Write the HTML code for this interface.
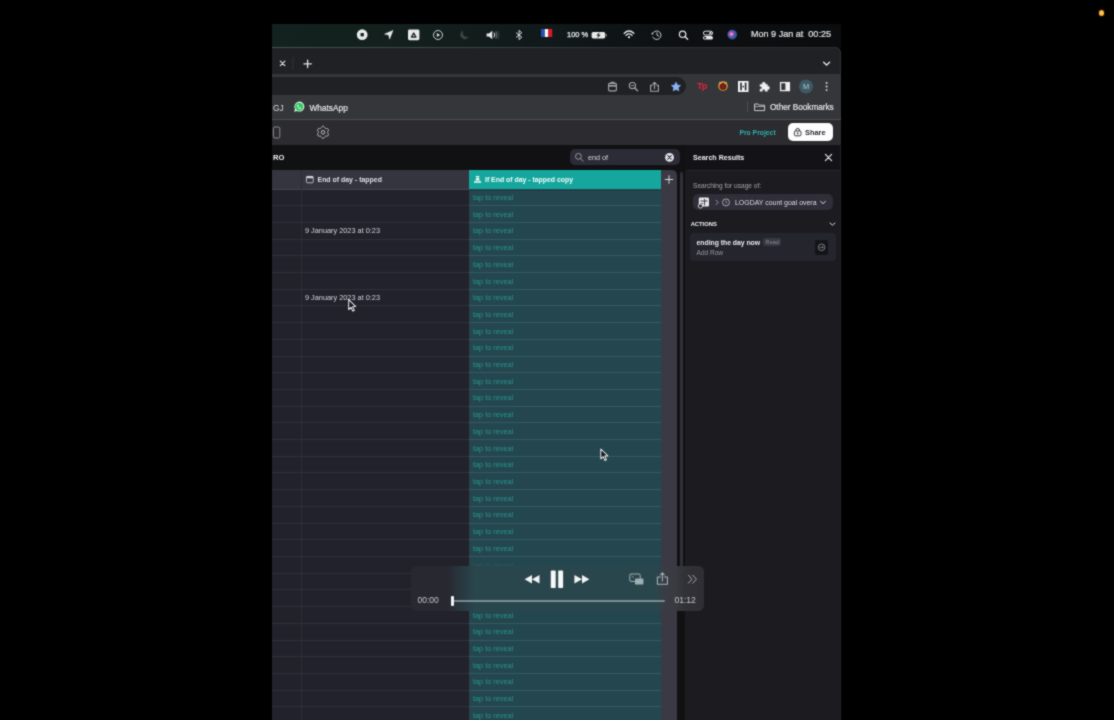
<!DOCTYPE html>
<html><head><meta charset="utf-8"><title>Search Results</title>
<style>
html,body{margin:0;padding:0;background:#000;}
body{width:1114px;height:720px;position:relative;overflow:hidden;font-family:"Liberation Sans",sans-serif;}
.a{position:absolute;}
.t{position:absolute;white-space:nowrap;line-height:10px;height:10px;margin-top:0.7px;}
svg{position:absolute;overflow:visible;}
.hl{position:absolute;left:272.4px;width:197.2px;height:1px;background:#30303a;}
.tl{position:absolute;left:469px;width:192px;height:1px;background:#375960;}
.tap{left:473px;font-size:7.3px;color:#29938c;}
</style></head><body>
<svg width="0" height="0" style="position:absolute"><defs><filter id="soft" x="0" y="0" width="100%" height="100%" color-interpolation-filters="sRGB"><feConvolveMatrix order="3" kernelMatrix="1 2 1 2 11 2 1 2 1" divisor="23" edgeMode="duplicate" preserveAlpha="true"/></filter></defs></svg>
<div id="root" style="position:absolute;left:0;top:0;width:1114px;height:730px;background:#000;filter:url(#soft);">
<!-- orange dot -->
<div class="a" style="left:1098.5px;top:10.3px;width:5.4px;height:5.4px;border-radius:50%;background:radial-gradient(circle,#ffd45a 0%,#f7b63c 55%,#e8801c 100%);box-shadow:0 0 1.5px #c8500c;"></div>

<!-- menu bar -->
<div class="a" id="menubar" style="left:272.4px;top:24px;width:568.2px;height:23.5px;background:linear-gradient(90deg,#13221e 0%,#13201d 22%,#11191a 48%,#0d1012 72%,#0b0c0e 100%);"></div>

<!-- window -->
<div class="a" id="win" style="left:272.4px;top:47px;width:568.7px;height:683px;background:#202124;border-top-right-radius:6px;overflow:hidden;box-shadow:inset -1px 0 0 #303135;">
  <div class="a" style="left:0;top:0;width:569px;height:1px;background:linear-gradient(90deg,#43524f 0%,#3a4644 35%,#2e3335 60%,#2b2d30 100%);"></div>
  <div class="a" id="toolbar" style="left:0;top:27px;width:569px;height:45.5px;background:#35363a;"></div>
  <div class="a" id="omni" style="left:-20px;top:30px;width:433.5px;height:18.4px;border-radius:9px;background:#202124;"></div>
  <div class="a" style="left:0;top:71.7px;width:569px;height:1.2px;background:#4b4c50;"></div>
  <div class="a" id="apptb" style="left:0;top:72.9px;width:569px;height:25.3px;background:#2b2b30;"></div>
  <div class="a" id="darkhd" style="left:0;top:98px;width:569px;height:590px;background:#111114;"></div>
</div>

<!-- GRID -->
<div class="a" id="gridhd" style="left:272.4px;top:169.5px;width:197.2px;height:19.5px;background:#35353f;"></div>
<div class="a" id="gridbody" style="left:272.4px;top:189px;width:197.2px;height:541px;background:#22222b;"></div>
<div class="a" id="tealhd" style="left:469px;top:169.5px;width:192px;height:20px;background:#15a79d;"></div>
<div class="a" id="tealbody" style="left:469px;top:189px;width:192px;height:541px;background:#24474f;"></div>
<div class="a" id="pluscol" style="left:661px;top:169.5px;width:16.2px;height:561px;background:#3a3944;border-top-right-radius:5px;"></div>
<div class="a" style="left:272.4px;top:188.5px;width:197.2px;height:1px;background:#44444e;"></div>
<div class="a" style="left:300.5px;top:169.5px;width:1px;height:561px;background:#2d2d37;"></div>
<div class="a" style="left:468.5px;top:189px;width:1px;height:541px;background:#2f3f49;"></div>
<div class="hl" style="top:205.20px"></div><div class="hl" style="top:221.91px"></div><div class="hl" style="top:238.62px"></div><div class="hl" style="top:255.32px"></div><div class="hl" style="top:272.02px"></div><div class="hl" style="top:288.73px"></div><div class="hl" style="top:305.44px"></div><div class="hl" style="top:322.14px"></div><div class="hl" style="top:338.84px"></div><div class="hl" style="top:355.55px"></div><div class="hl" style="top:372.25px"></div><div class="hl" style="top:388.96px"></div><div class="hl" style="top:405.66px"></div><div class="hl" style="top:422.37px"></div><div class="hl" style="top:439.07px"></div><div class="hl" style="top:455.78px"></div><div class="hl" style="top:472.48px"></div><div class="hl" style="top:489.19px"></div><div class="hl" style="top:505.89px"></div><div class="hl" style="top:522.60px"></div><div class="hl" style="top:539.30px"></div><div class="hl" style="top:556.01px"></div><div class="hl" style="top:572.71px"></div><div class="hl" style="top:589.42px"></div><div class="hl" style="top:606.12px"></div><div class="hl" style="top:622.83px"></div><div class="hl" style="top:639.53px"></div><div class="hl" style="top:656.24px"></div><div class="hl" style="top:672.94px"></div><div class="hl" style="top:689.65px"></div><div class="hl" style="top:706.35px"></div><div class="hl" style="top:723.06px"></div>
<div class="tl" style="top:205.20px"></div><div class="tl" style="top:221.91px"></div><div class="tl" style="top:238.62px"></div><div class="tl" style="top:255.32px"></div><div class="tl" style="top:272.02px"></div><div class="tl" style="top:288.73px"></div><div class="tl" style="top:305.44px"></div><div class="tl" style="top:322.14px"></div><div class="tl" style="top:338.84px"></div><div class="tl" style="top:355.55px"></div><div class="tl" style="top:372.25px"></div><div class="tl" style="top:388.96px"></div><div class="tl" style="top:405.66px"></div><div class="tl" style="top:422.37px"></div><div class="tl" style="top:439.07px"></div><div class="tl" style="top:455.78px"></div><div class="tl" style="top:472.48px"></div><div class="tl" style="top:489.19px"></div><div class="tl" style="top:505.89px"></div><div class="tl" style="top:522.60px"></div><div class="tl" style="top:539.30px"></div><div class="tl" style="top:556.01px"></div><div class="tl" style="top:572.71px"></div><div class="tl" style="top:589.42px"></div><div class="tl" style="top:606.12px"></div><div class="tl" style="top:622.83px"></div><div class="tl" style="top:639.53px"></div><div class="tl" style="top:656.24px"></div><div class="tl" style="top:672.94px"></div><div class="tl" style="top:689.65px"></div><div class="tl" style="top:706.35px"></div><div class="tl" style="top:723.06px"></div>
<div class="a" style="left:0;top:0;width:1114px;height:720px;will-change:transform;"><div class="t tap" style="top:192.35px">tap to reveal</div><div class="t tap" style="top:209.06px">tap to reveal</div><div class="t tap" style="top:225.76px">tap to reveal</div><div class="t tap" style="top:242.47px">tap to reveal</div><div class="t tap" style="top:259.17px">tap to reveal</div><div class="t tap" style="top:275.88px">tap to reveal</div><div class="t tap" style="top:292.58px">tap to reveal</div><div class="t tap" style="top:309.29px">tap to reveal</div><div class="t tap" style="top:325.99px">tap to reveal</div><div class="t tap" style="top:342.70px">tap to reveal</div><div class="t tap" style="top:359.40px">tap to reveal</div><div class="t tap" style="top:376.11px">tap to reveal</div><div class="t tap" style="top:392.81px">tap to reveal</div><div class="t tap" style="top:409.52px">tap to reveal</div><div class="t tap" style="top:426.22px">tap to reveal</div><div class="t tap" style="top:442.93px">tap to reveal</div><div class="t tap" style="top:459.63px">tap to reveal</div><div class="t tap" style="top:476.34px">tap to reveal</div><div class="t tap" style="top:493.04px">tap to reveal</div><div class="t tap" style="top:509.75px">tap to reveal</div><div class="t tap" style="top:526.45px">tap to reveal</div><div class="t tap" style="top:543.16px">tap to reveal</div><div class="t tap" style="top:559.86px;opacity:0.3">tap to reveal</div><div class="t tap" style="top:576.57px">tap to reveal</div><div class="t tap" style="top:593.27px">tap to reveal</div><div class="t tap" style="top:609.98px">tap to reveal</div><div class="t tap" style="top:626.68px">tap to reveal</div><div class="t tap" style="top:643.39px">tap to reveal</div><div class="t tap" style="top:660.09px">tap to reveal</div><div class="t tap" style="top:676.80px">tap to reveal</div><div class="t tap" style="top:693.50px">tap to reveal</div><div class="t tap" style="top:710.21px">tap to reveal</div><div class="t tap" style="top:726.91px">tap to reveal</div></div>
<div class="a" style="left:469px;top:189.5px;width:192px;height:1px;background:#1f3e47;"></div>
<!-- scrollbar -->
<div class="a" style="left:679.6px;top:172px;width:3.1px;height:420px;background:#30303a;border-radius:1.5px;"></div>

<!-- right panel -->
<div class="a" id="panelhd" style="left:685px;top:145px;width:156.1px;height:25px;background:#131317;"></div>
<div class="a" id="panel" style="left:685px;top:169.7px;width:156.1px;height:551px;background:#1b1b20;border-top-left-radius:4px;border-top:1px solid #26262d;"></div>
<div class="a" style="left:839.9px;top:146px;width:1.2px;height:584px;background:#222228;"></div>

<div class="a" id="txt" style="left:0;top:0;width:1114px;height:720px;will-change:transform;">
<!-- menu bar text -->
<div class="t" style="left:567px;top:29.3px;font-size:7.5px;color:#e6e8e8;-webkit-text-stroke:0.25px #e6e8e8;">100 %</div>
<div class="t" style="left:751px;top:28.3px;font-size:9.05px;color:#e4e4e6;-webkit-text-stroke:0.2px #e4e4e6;">Mon 9 Jan at&nbsp; 00:25</div>
<!-- bookmarks -->
<div class="t" style="left:273px;top:102px;font-size:8.3px;color:#dcdde0;">GJ</div>
<div class="t" style="left:309.5px;top:102px;font-size:8.3px;color:#e2e3e6;-webkit-text-stroke:0.2px #e2e3e6;">WhatsApp</div>
<div class="t" style="left:770px;top:102.3px;font-size:8.2px;color:#e2e3e6;-webkit-text-stroke:0.2px #e2e3e6;">Other Bookmarks</div>
<!-- app toolbar -->
<div class="t" style="left:739.4px;top:127.4px;font-size:6.8px;font-weight:bold;color:#2fb0a9;">Pro Project</div>
<div class="a" style="left:787.5px;top:123px;width:45.5px;height:18px;border-radius:5px;background:#fdfdfd;"></div>
<div class="t" style="left:805px;top:127.4px;font-size:7.4px;font-weight:bold;color:#2a2a30;">Share</div>
<!-- dark header -->
<div class="t" style="left:273px;top:152px;font-size:7.6px;font-weight:bold;color:#f0f0f2;">RO</div>
<div class="a" style="left:569.5px;top:149px;width:110px;height:16.4px;border-radius:5px;background:#2c2c36;"></div>
<div class="t" style="left:588px;top:152.2px;font-size:7.2px;color:#d6d6dc;">end of</div>
<div class="t" style="left:693px;top:152.3px;font-size:7.1px;font-weight:bold;color:#ededf0;">Search Results</div>
<!-- grid header -->
<div class="t" style="left:317.5px;top:174.3px;font-size:6.95px;font-weight:bold;color:#dedee4;">End of day - tapped</div>
<div class="t" style="left:485px;top:174.3px;font-size:6.9px;font-weight:bold;color:#f2fbfa;">If End of day - tapped copy</div>
<div class="t" style="left:305px;top:225.7px;font-size:7.33px;color:#d4d4da;">9 January 2023 at 0:23</div>
<div class="t" style="left:305px;top:292.5px;font-size:7.33px;color:#d4d4da;">9 January 2023 at 0:23</div>
<!-- right panel -->
<div class="t" style="left:693px;top:180.4px;font-size:6.6px;color:#a4a4ae;">Searching for usage of:</div>
<div class="a" style="left:693px;top:194.2px;width:139.7px;height:16.2px;border-radius:5px;background:#2f2e39;"></div>
<div class="t" style="left:735px;top:197.3px;font-size:6.95px;color:#dedee4;">LOGDAY count goal overa</div>
<div class="t" style="left:690.7px;top:218.5px;font-size:5.8px;font-weight:bold;color:#f0f0f4;">ACTIONS</div>
<div class="a" style="left:690px;top:233.4px;width:145.8px;height:28px;border-radius:4px;background:#25252d;"></div>
<div class="t" style="left:696.6px;top:237.4px;font-size:6.8px;font-weight:bold;color:#eaeaee;">ending the day now</div>
<div class="a" style="left:763.3px;top:238px;width:18px;height:8.2px;border-radius:2px;background:#383843;"></div>
<div class="t" style="left:765.6px;top:236.3px;font-size:5.6px;color:#8a8a96;">Read</div>
<div class="t" style="left:696.6px;top:247.6px;font-size:6.5px;color:#9c9ca6;">Add Row</div>
<div class="a" style="left:814.8px;top:240px;width:13.3px;height:14.5px;border-radius:2px;background:#141418;"></div>

</div>
<svg width="1114" height="720" viewBox="0 0 1114 720" style="left:0;top:0;">
<!-- ===== menu bar icons ===== -->
<g fill="#e9ebea" stroke="none">
  <!-- stop record -->
  <circle cx="362.2" cy="34.7" r="5.4"/>
  <rect x="360.5" y="33" width="3.4" height="3.4" rx="0.8" fill="#15211e"/>
  <!-- location arrow -->
  <path d="M393 30.4 L384.6 34.1 L388.7 35.0 L389.6 39.1 Z" stroke="#e9ebea" stroke-width="0.5" stroke-linejoin="round"/>
  <!-- square w/ triangle -->
  <rect x="408" y="29.6" width="11.4" height="10.6" rx="1.4"/>
  <path d="M413.7 33 L416 37 L411.4 37 Z" fill="none" stroke="#15211e" stroke-width="1.3" stroke-linejoin="round"/>
  <!-- play circle -->
  <circle cx="438" cy="35" r="4.5" fill="none" stroke="#d8dbda" stroke-width="0.95"/>
  <path d="M436.8 33 L440.2 35 L436.8 37 Z" fill="#d8dbda"/>
  <!-- moon (dim) -->
  <path d="M463.5 30.2 A4.6 4.6 0 1 0 469 36.6 A4.4 4.4 0 0 1 463.5 30.2 Z" fill="#3a4644"/>
  <!-- speaker -->
  <path d="M486.6 33.4 L489 33.4 L492.3 30.8 L492.3 39.2 L489 36.6 L486.6 36.6 Z"/>
  <path d="M494 32.6 Q495.6 35 494 37.4" fill="none" stroke="#e9ebea" stroke-width="1"/>
  <path d="M495.9 31.4 Q498.2 35 495.9 38.6" fill="none" stroke="#848c8a" stroke-width="0.9"/>
  <path d="M497.9 30.4 Q500.6 35 497.9 39.6" fill="none" stroke="#3f4745" stroke-width="0.9"/>
  <!-- bluetooth -->
  <path d="M516 32.6 L521.8 37.2 L519 39.6 L519 30.4 L521.8 32.8 L516 37.4" fill="none" stroke="#dfe1e0" stroke-width="0.95" stroke-linejoin="round"/>
</g>
<!-- flag -->
<rect x="541" y="29" width="3.8" height="8" fill="#2350b0"/>
<rect x="544.8" y="29" width="3.6" height="8" fill="#f4f4f6"/>
<rect x="548.4" y="29" width="3.8" height="8" fill="#e1142c"/>
<!-- battery -->
<rect x="591.6" y="32" width="13.6" height="6.4" rx="1.6" fill="#e9ebea"/>
<rect x="605.7" y="34" width="1.1" height="2.4" rx="0.5" fill="#8c9290"/>
<path d="M599.6 32.3 L596.2 35.6 L598.3 35.6 L597.2 38.2 L600.8 34.8 L598.7 34.8 Z" fill="#15191a"/>
<!-- wifi -->
<g fill="none" stroke="#e9ebea" stroke-width="1.35" stroke-linecap="round">
  <path d="M624.2 33.2 Q629 28.9 633.8 33.2"/>
  <path d="M626 35.2 Q629 32.6 632 35.2"/>
</g>
<circle cx="629" cy="37.2" r="1.1" fill="#e9ebea"/>
<!-- time machine -->
<g fill="none" stroke="#d6d8d8" stroke-width="0.95" stroke-linecap="round">
  <path d="M653.4 32.4 A4.3 4.3 0 1 1 652.8 37.2"/>
  <path d="M657 32.8 L657 35.2 L658.6 36.2"/>
</g>
<path d="M651.2 34.2 L653.6 34.6 L652.4 32.2 Z" fill="#e4e6e6"/>
<!-- search -->
<circle cx="682.6" cy="34.2" r="3.2" fill="none" stroke="#e6e6e8" stroke-width="1.25"/>
<path d="M685 36.6 L687.6 39.2" stroke="#e6e6e8" stroke-width="1.4" stroke-linecap="round"/>
<!-- control center -->
<rect x="703.4" y="31.2" width="9.2" height="3.8" rx="1.9" fill="none" stroke="#e6e6e8" stroke-width="1"/>
<circle cx="710.4" cy="33.1" r="1.2" fill="#e6e6e8"/>
<rect x="703" y="35.9" width="10" height="3.7" rx="1.85" fill="#e6e6e8"/>
<circle cx="705.1" cy="37.75" r="1.1" fill="#15171a"/>
<!-- siri -->
<defs>
  <radialGradient id="siri" cx="0.42" cy="0.45" r="0.6">
    <stop offset="0" stop-color="#e8d0ee"/>
    <stop offset="0.3" stop-color="#c05aa0"/>
    <stop offset="0.65" stop-color="#3a4fb8"/>
    <stop offset="1" stop-color="#1a6f86"/>
  </radialGradient>
</defs>
<circle cx="732.2" cy="34.6" r="4.8" fill="url(#siri)"/>

<!-- ===== tab bar ===== -->
<g stroke="#e4e5e8" stroke-width="1.1" stroke-linecap="round" fill="none">
  <path d="M280.3 61.1 L284.9 65.7 M284.9 61.1 L280.3 65.7"/>
  <path d="M303.9 63.8 L311.3 63.8 M307.6 60.1 L307.6 67.5" stroke-width="1.3"/>
  <path d="M823.6 62.2 L826.6 65 L829.6 62.2" stroke-width="1.3"/>
</g>
<rect x="292.5" y="57" width="0.8" height="13" fill="#36373b"/>

<!-- ===== omnibox icons ===== -->
<g fill="none" stroke="#a2a5aa" stroke-width="1.15" stroke-linejoin="round">
  <!-- clipboard -->
  <rect x="608.6" y="83.4" width="7.8" height="7.4" rx="1"/>
  <path d="M608.6 85.8 L616.4 85.8" stroke-width="1.6"/>
  <path d="M611 83 L611 82.2 L614 82.2 L614 83"/>
  <!-- zoom -->
  <circle cx="632.4" cy="85.6" r="3.1"/>
  <path d="M634.8 88 L637.6 90.8" stroke-linecap="round" stroke-width="1.4"/>
  <path d="M630.9 85.6 L633.9 85.6" stroke-width="0.9"/>
  <!-- share -->
  <path d="M652.4 85.4 L650.6 85.4 L650.6 91.2 L658.4 91.2 L658.4 85.4 L656.6 85.4"/>
  <path d="M654.5 88.4 L654.5 82.6 M652.8 84.2 L654.5 82.4 L656.2 84.2" stroke-linecap="round"/>
</g>
<!-- star -->
<path d="M676 82 L677.45 84.95 L680.7 85.4 L678.35 87.7 L678.9 90.95 L676 89.4 L673.1 90.95 L673.65 87.7 L671.3 85.4 L674.55 84.95 Z" fill="#8ab4f8" stroke="#8ab4f8" stroke-width="0.5" stroke-linejoin="round"/>

<!-- ===== extension icons ===== -->
<text x="697" y="89.2" font-family="Liberation Sans, sans-serif" font-weight="bold" font-size="9.2" fill="#e4223c" letter-spacing="-0.8">Tp</text>
<!-- emoji -->
<circle cx="723" cy="86" r="4.8" fill="#d89a3c"/>
<circle cx="723" cy="86.4" r="3.4" fill="#3a2418"/>
<path d="M720.6 84 L725.4 89 M725.4 84 L720.6 89" stroke="#a01818" stroke-width="1.2"/>
<path d="M719.4 82.4 L721.4 83.6 M726.6 82.4 L724.6 83.6" stroke="#f0d070" stroke-width="1"/>
<!-- white square icon -->
<rect x="738" y="81" width="10.5" height="11" fill="#f4f4f6"/>
<rect x="740.2" y="82.6" width="1.6" height="7.8" fill="#202226"/>
<rect x="744.8" y="82.6" width="1.6" height="7.8" fill="#202226"/>
<rect x="742.6" y="85.8" width="1.4" height="1.6" fill="#202226"/>
<!-- puzzle -->
<path d="M760 84.4 L762.4 84.4 A1.5 1.5 0 1 1 765.2 84.4 L767.4 84.4 L767.4 86.4 A1.5 1.5 0 1 1 767.4 89.2 L767.4 91.2 L765 91.2 A1.4 1.4 0 1 0 762.4 91.2 L760 91.2 L760 89 A1.4 1.4 0 1 0 760 86.4 Z" fill="#f0f0f2" stroke="#f0f0f2" stroke-width="0.5" stroke-linejoin="round"/>
<!-- side panel -->
<rect x="780.6" y="82.6" width="8.8" height="8" fill="none" stroke="#f0f0f2" stroke-width="1.3"/>
<rect x="785.4" y="82.6" width="4" height="8" fill="#f0f0f2"/>
<!-- avatar -->
<circle cx="806" cy="86.5" r="7" fill="#3d5a66"/>
<text x="806" y="89.2" text-anchor="middle" font-family="Liberation Sans, sans-serif" font-size="7.4" fill="#b9ccd2">M</text>
<!-- dots -->
<circle cx="826.6" cy="82.9" r="0.95" fill="#e6e6ea"/>
<circle cx="826.6" cy="86.5" r="0.95" fill="#e6e6ea"/>
<circle cx="826.6" cy="90.1" r="0.95" fill="#e6e6ea"/>

<!-- ===== bookmarks bar ===== -->
<!-- whatsapp -->
<path d="M294.2 111.8 L295 108.9 A5 5 0 1 1 296.9 110.9 Z" fill="#f2f5f3"/>
<circle cx="299.2" cy="106.8" r="4.1" fill="#2fcb63"/>
<path d="M297.4 104.8 Q296.8 106.8 298.6 108.2 Q300.2 109.6 301.4 108.6 L300.6 107.6 L299.8 108 Q298.6 107.4 298.2 106.2 L298.7 105.6 L298.1 104.6 Z" fill="#f2f5f3"/>
<!-- folder -->
<rect x="747.2" y="101.6" width="0.8" height="10.6" fill="#55575c"/>
<path d="M754.6 104 L758.2 104 L759.2 105.2 L764.6 105.2 L764.6 110.6 L754.6 110.6 Z" fill="none" stroke="#c9cbd0" stroke-width="1" stroke-linejoin="round"/>
<path d="M754.6 106.6 L764.6 106.6" stroke="#c9cbd0" stroke-width="0.7"/>

<!-- ===== app toolbar ===== -->
<rect x="273.4" y="127" width="6.4" height="11" rx="1.6" fill="none" stroke="#8b8b93" stroke-width="1"/>
<!-- gear -->
<g fill="none" stroke="#c0c0c8" stroke-width="1" stroke-linejoin="round">
  <path d="M323.00 126.20 L323.52 126.32 L323.99 126.66 L324.38 127.13 L324.70 127.63 L324.99 128.04 L325.30 128.32 L325.70 128.45 L326.20 128.49 L326.78 128.52 L327.39 128.62 L327.91 128.86 L328.28 129.25 L328.44 129.76 L328.38 130.34 L328.17 130.92 L327.90 131.44 L327.68 131.89 L327.60 132.30 L327.68 132.71 L327.90 133.16 L328.17 133.68 L328.38 134.26 L328.44 134.84 L328.28 135.35 L327.91 135.74 L327.39 135.98 L326.78 136.08 L326.20 136.11 L325.70 136.15 L325.30 136.28 L324.99 136.56 L324.70 136.97 L324.38 137.47 L323.99 137.94 L323.52 138.28 L323.00 138.40 L322.48 138.28 L322.01 137.94 L321.62 137.47 L321.30 136.97 L321.01 136.56 L320.70 136.28 L320.30 136.15 L319.80 136.11 L319.22 136.08 L318.61 135.98 L318.09 135.74 L317.72 135.35 L317.56 134.84 L317.62 134.26 L317.83 133.68 L318.10 133.16 L318.32 132.71 L318.40 132.30 L318.32 131.89 L318.10 131.44 L317.83 130.92 L317.62 130.34 L317.56 129.76 L317.72 129.25 L318.09 128.86 L318.61 128.62 L319.22 128.52 L319.80 128.49 L320.30 128.45 L320.70 128.32 L321.01 128.04 L321.30 127.63 L321.62 127.13 L322.01 126.66 L322.48 126.32 Z"/>
  <circle cx="323" cy="132.3" r="1.8"/>
</g>
<!-- share lock -->
<g fill="none" stroke="#2a2a30" stroke-width="0.95">
  <rect x="794.4" y="131" width="6.6" height="4.8" rx="1.2"/>
  <path d="M795.9 131 L795.9 130.2 A1.8 1.8 0 0 1 799.5 130.2 L799.5 131"/>
</g>
<circle cx="797.7" cy="133.4" r="0.8" fill="#2a2a30"/>

<!-- ===== search box ===== -->
<circle cx="578.4" cy="156.4" r="2.9" fill="none" stroke="#a6a6b0" stroke-width="0.9"/>
<path d="M580.6 158.6 L583.2 161.2" stroke="#a6a6b0" stroke-width="0.9" stroke-linecap="round"/>
<circle cx="669.5" cy="157.4" r="4.4" fill="#e6e6ea"/>
<path d="M667.8 155.7 L671.2 159.1 M671.2 155.7 L667.8 159.1" stroke="#2c2c36" stroke-width="1.1" stroke-linecap="round"/>

<!-- ===== grid header icons ===== -->
<rect x="306.4" y="176.4" width="6.8" height="6.4" rx="1" fill="none" stroke="#d6d6dc" stroke-width="0.8"/>
<rect x="306.4" y="176.2" width="6.8" height="2" rx="0.6" fill="#d6d6dc"/>
<!-- teal icon -->
<g fill="#eefaf8">
  <rect x="475.8" y="176" width="3.6" height="1.6" rx="0.4"/>
  <path d="M476.4 178 L478.8 178 L480 180.6 L475.2 180.6 Z"/>
  <rect x="474" y="181.2" width="7.2" height="1.6" rx="0.4"/>
</g>
<path d="M665.2 179.5 L672.8 179.5 M669 175.7 L669 183.3" stroke="#e2e2e8" stroke-width="0.95" stroke-linecap="round"/>

<!-- ===== right panel icons ===== -->
<path d="M825.4 154.4 L831.6 160.6 M831.6 154.4 L825.4 160.6" stroke="#ececf0" stroke-width="1.15" stroke-linecap="round"/>
<!-- chip icon -->
<rect x="698.8" y="197.6" width="10.2" height="9" rx="1.4" fill="#e8e8ec"/>
<path d="M700.4 201 L707.6 201 M704.6 199 L704.6 205.4 M700.6 203.6 L703 203.6" stroke="#2d2d38" stroke-width="0.9"/>
<circle cx="700.4" cy="206" r="2.1" fill="#2d2d38" stroke="#e8e8ec" stroke-width="0.8"/>
<path d="M716 200.2 L718.2 202.4 L716 204.6" fill="none" stroke="#a2a2ac" stroke-width="0.9" stroke-linecap="round"/>
<circle cx="726" cy="202.4" r="3.5" fill="none" stroke="#c8c8d0" stroke-width="0.8"/>
<path d="M726 200.6 L726 202.6 L727.2 203.2" fill="none" stroke="#c8c8d0" stroke-width="0.7"/>
<path d="M820.6 201.4 L823 203.6 L825.4 201.4" fill="none" stroke="#dcdce2" stroke-width="1" stroke-linecap="round"/>
<path d="M830 223 L832.5 225.2 L835 223" fill="none" stroke="#dcdce2" stroke-width="1" stroke-linecap="round"/>
<!-- card button icon -->
<circle cx="821.6" cy="247.3" r="3.3" fill="none" stroke="#94949e" stroke-width="0.8"/>
<path d="M819.4 247.3 L823.2 247.3 M822 246 L823.3 247.3 L822 248.6" fill="none" stroke="#94949e" stroke-width="0.7"/>
</svg>

<div class="a" id="ovw" style="left:0;top:0;width:1114px;height:720px;will-change:transform;">
<!-- media overlay -->
<div class="a" id="ov" style="left:411px;top:566px;width:293px;height:44.5px;border-radius:6px;overflow:hidden;background:#282830;">
  <div class="a" style="left:0;top:0;width:250px;height:45px;background:linear-gradient(90deg,#282830 0px,#282830 36px,#2a464d 64px,#2a464d 250px);"></div>
  <div class="a" style="left:240px;top:0;width:53px;height:45px;background:linear-gradient(90deg,#2a464d 0px,#2a464d 5px,#3b3b43 15px,#3a3a42 24px,#313137 34px,#2e2e34 53px);"></div>
</div>
<div class="t" style="left:417.5px;top:594.4px;font-size:8.5px;color:#c4c5ca;letter-spacing:0px;">00:00</div>
<div class="t" style="left:674.4px;top:594.4px;font-size:8.6px;color:#c4c5ca;letter-spacing:0px;">01:12</div>
<div class="a" style="left:453px;top:599.5px;width:212px;height:2.1px;border-radius:1px;background:rgba(200,215,218,0.5);"></div>
<div class="a" style="left:450.6px;top:595.5px;width:3.2px;height:10px;border-radius:1px;background:#f4f4f6;"></div>
<svg width="1114" height="720" viewBox="0 0 1114 720" style="left:0;top:0;">
  <!-- rewind -->
  <path d="M524.6 579.3 L532 575 L532 583.6 Z M532 579.3 L539.5 575 L539.5 583.6 Z" fill="#f2f4f5"/>
  <!-- pause -->
  <rect x="550.8" y="570.6" width="4.9" height="17.4" rx="0.8" fill="#f7f8f9"/>
  <rect x="558.2" y="570.6" width="4.9" height="17.4" rx="0.8" fill="#f7f8f9"/>
  <!-- ff -->
  <path d="M589.4 579.3 L582 575 L582 583.6 Z M582 579.3 L574.4 575 L574.4 583.6 Z" fill="#f2f4f5"/>
  <!-- pip -->
  <rect x="629.8" y="574" width="10.4" height="7.4" rx="1.2" fill="none" stroke="#9fb0b3" stroke-width="1"/>
  <rect x="635" y="578.4" width="8.4" height="6.2" rx="1.2" fill="#9fb0b3"/>
  <path d="M631.6 575.8 L633.6 577.6" stroke="#9fb0b3" stroke-width="0.8"/>
  <!-- share -->
  <g fill="none" stroke="#a9b4b8" stroke-width="1.05" stroke-linejoin="round" stroke-linecap="round">
    <path d="M660.4 577 L657.4 577 L657.4 584.2 L667.4 584.2 L667.4 577 L664.4 577"/>
    <path d="M662.4 581 L662.4 573 M660.4 574.8 L662.4 572.8 L664.4 574.8"/>
  </g>
  <!-- >> -->
  <path d="M688.4 575.2 L692 579.2 L688.4 583.2 M692.8 575.2 L696.4 579.2 L692.8 583.2" fill="none" stroke="#a4a4ac" stroke-width="1" stroke-linecap="round" stroke-linejoin="round"/>
  <!-- cursors -->
  <g id="cur1" transform="translate(348.1,299.3)">
    <path d="M0.6 0.4 L0.6 10.2 L2.9 8 L4.6 11.8 L6.2 11.1 L4.5 7.4 L7.6 7.3 Z" fill="#16161a" stroke="#e8e8ec" stroke-width="1.05" stroke-linejoin="round"/>
  </g>
  <g id="cur2" transform="translate(600.2,448.6)">
    <path d="M0.6 0.4 L0.6 10.2 L2.9 8 L4.6 11.8 L6.2 11.1 L4.5 7.4 L7.6 7.3 Z" fill="#16161a" stroke="#e8e8ec" stroke-width="1.05" stroke-linejoin="round"/>
  </g>
</svg>

</div>
</div>
</body></html>
